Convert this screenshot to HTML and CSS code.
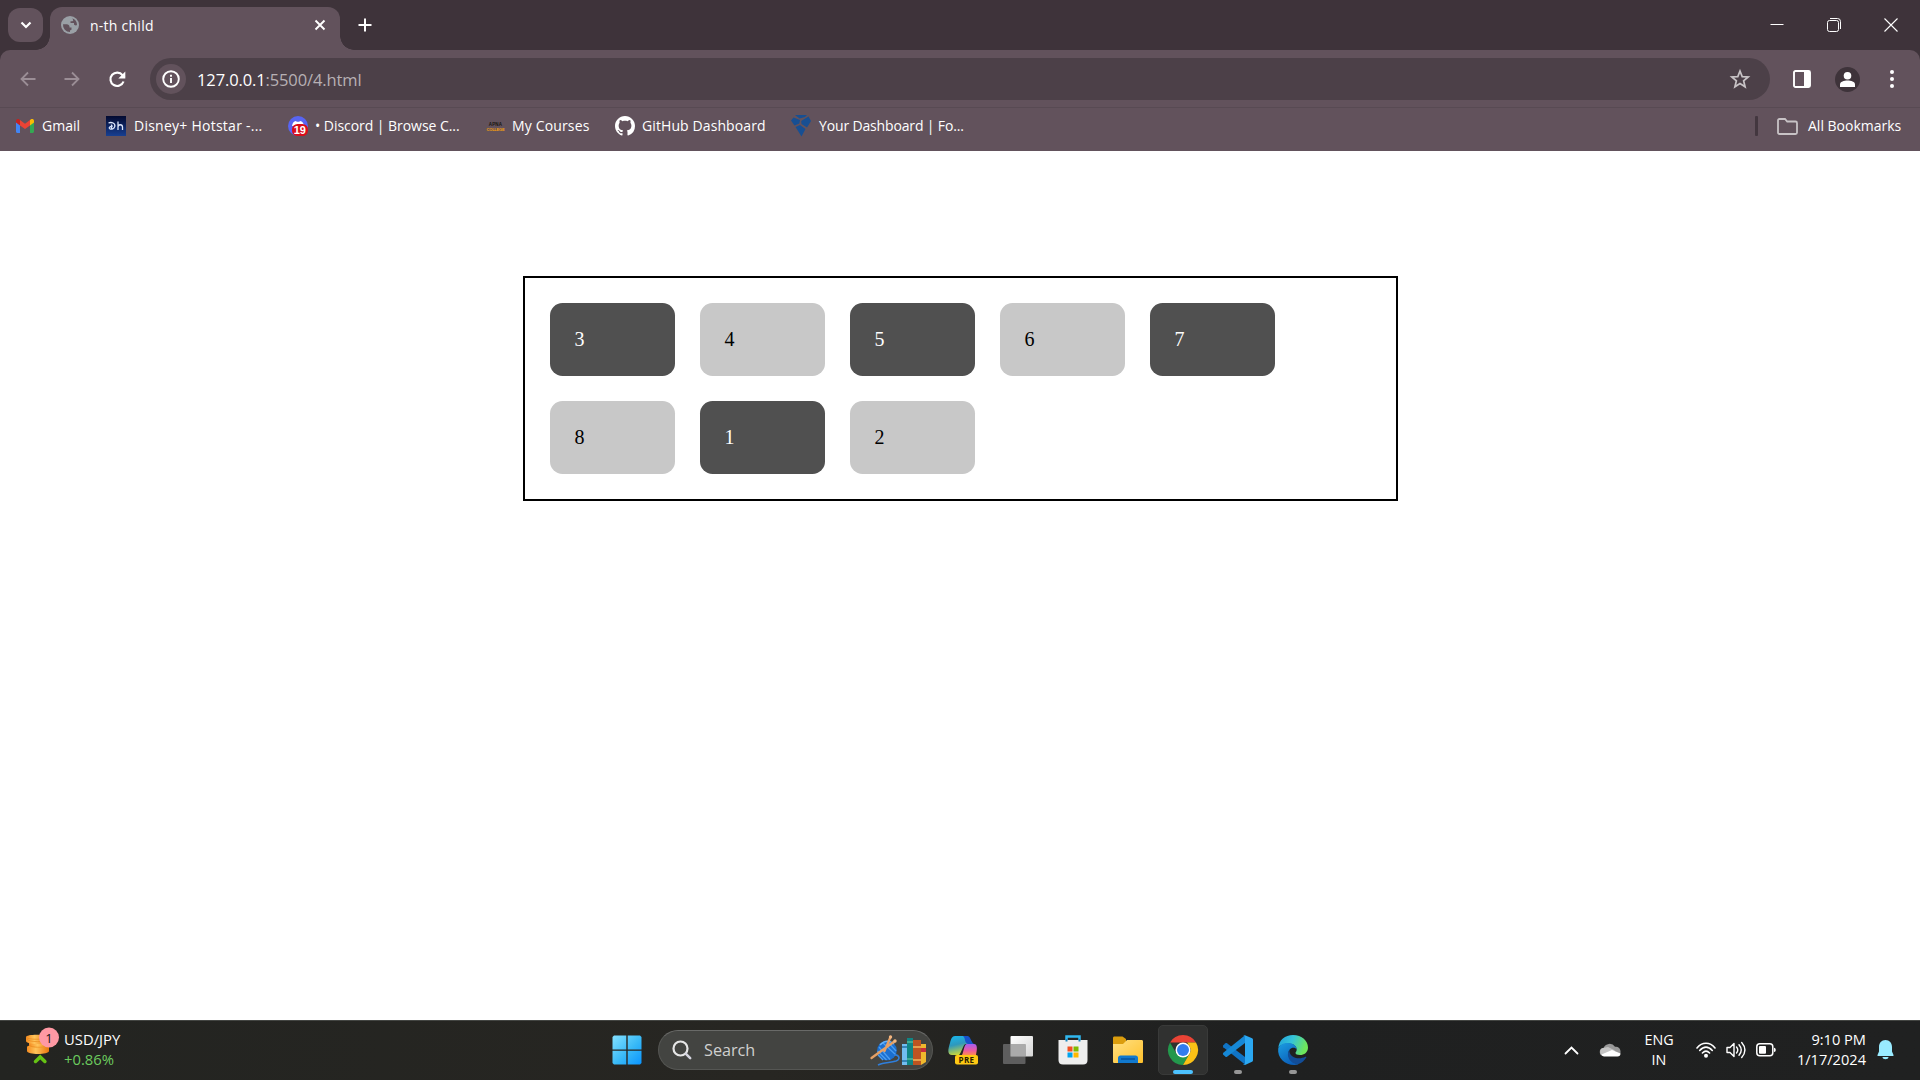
FILE: index.html
```html
<!DOCTYPE html>
<html lang="en">
<head>
<meta charset="utf-8">
<title>n-th child</title>
<link rel="stylesheet" href="styles.css">
</head>
<body>
<header class="browser">
  <div class="tabstrip">
    <button class="tab-search" aria-label="Search tabs"><svg width="12" height="12" viewBox="0 0 12 12"><path d="M1.500 3.500 6 8l4.500-4.500" fill="none" stroke="#fff" stroke-width="2.200"/></svg></button>
    <div class="tab">
      <svg class="tab-favicon" width="18" height="18" viewBox="0 0 18 18"><circle cx="9" cy="9" r="9" fill="#9aa0a6"/><path d="M11 2.200A7 7 0 0 1 16 9c-.8.800-3 .3-3-.8V7H9.500V5.200h1.800c1 0 1-1 .7-1.500-.3-.6-.5-1-.1-1.500zM2 8.300h3.800c1.500 0 2.700 1 2.700 2.500v.7h2v1.700c0 .8-.6 1-1.500 1V16A7 7 0 0 1 2 8.300z" fill="#62525c"/></svg>
      <span class="tab-title">n-th child</span>
      <svg class="tab-close" width="12" height="12" viewBox="0 0 12 12"><path d="m1.500 1.500 9 9m0-9-9 9" stroke="#fff" stroke-width="1.900"/></svg>
    </div>
    <svg class="new-tab" width="14" height="14" viewBox="0 0 14 14"><path d="M7 .5v13M.5 7h13" stroke="#fff" stroke-width="2"/></svg>
    <div class="window-controls">
      <svg width="14" height="14" viewBox="0 0 14 14"><path d="M.5 6.500h13" stroke="#fff"/></svg>
      <svg width="14" height="14" viewBox="0 0 14 14" fill="none" stroke="#fff"><rect x=".5" y="2.500" width="11" height="11" rx="2"/><path d="M3 .5h7.500a3 3 0 0 1 3 3V11"/></svg>
      <svg width="14" height="14" viewBox="0 0 14 14"><path d="m.5.5 13 13m0-13-13 13" stroke="#fff" stroke-width="1.100"/></svg>
    </div>
  </div>
  <div class="toolbar">
    <svg class="nav-back" width="16" height="16" viewBox="0 0 16 16"><path d="M15.500 8H2M8 1.500 1.500 8 8 14.500" fill="none" stroke="#9b8e96" stroke-width="1.800"/></svg>
    <svg class="nav-forward" width="16" height="16" viewBox="0 0 16 16"><path d="M.5 8H14M8 1.500 14.500 8 8 14.500" fill="none" stroke="#9b8e96" stroke-width="1.800"/></svg>
    <svg class="nav-reload" width="17" height="17" viewBox="0 0 17 17"><path d="M14.500 10.500a6.700 6.700 0 1 1-1-6.300l2 2" fill="none" stroke="#fff" stroke-width="2.200"/><path d="M16.300.5v7h-7z" fill="#fff"/></svg>
    <div class="omnibox">
      <span class="site-info"><svg width="18" height="18" viewBox="0 0 18 18"><circle cx="9" cy="9" r="7.800" fill="none" stroke="#fff" stroke-width="1.900"/><path d="M9 8v5M9 4.700v2" stroke="#fff" stroke-width="1.900"/></svg></span>
      <span class="url"><span class="host">127.0.0.1</span>:5500/4.html</span>
      <svg class="star" width="20" height="20" viewBox="0 0 20 20"><path d="m10 2 2.200 5.600 6 .4-4.600 3.800 1.500 6L10 14.500l-5.100 3.300 1.500-6L1.800 8l6-.4z" fill="none" stroke="#c8c3c6" stroke-width="1.700"/></svg>
    </div>
    <svg class="side-panel" width="18" height="18" viewBox="0 0 18 18"><rect x="1" y="1" width="16" height="16" rx="1.500" fill="none" stroke="#fff" stroke-width="1.900"/><path d="M11 1h6v16h-6z" fill="#fff"/></svg>
    <svg class="profile" width="25" height="25" viewBox="0 0 25 25"><circle cx="12.500" cy="12.500" r="12.500" fill="#3e333a"/><circle cx="12.500" cy="8.700" r="3.800" fill="#fff"/><path d="M5 20v-2.500c0-3 4-4 7.500-4s7.500 1 7.500 4V20z" fill="#fff"/></svg>
    <svg class="menu" width="4" height="18" viewBox="0 0 4 18" fill="#fff"><circle cx="2" cy="2" r="2"/><circle cx="2" cy="9" r="2"/><circle cx="2" cy="16" r="2"/></svg>
  </div>
  <nav class="bookmarks">
    <a class="bm bm-gmail"><svg width="18" height="14" viewBox="0 0 18 14"><path d="M0 2v10.500C0 13.400.6 14 1.500 14H4V5z" fill="#4285f4"/><path d="M14 5v9h2.500c.9 0 1.500-.6 1.500-1.500V2z" fill="#34a853"/><path d="M14 1v5.500L18 3.500V2c0-2-2-2.500-3.300-1.500z" fill="#fbbc04"/><path d="M4 1v5.500L9 10l5-3.500V1L9 4.800z" fill="#ea4335"/><path d="M0 2v1.500l4 3V1L3.300.5C2-.5 0 .2 0 2z" fill="#c5221f"/></svg><span>Gmail</span></a>
    <a class="bm bm-hotstar"><svg width="20" height="20" viewBox="0 0 20 20"><defs><linearGradient id="hs" x2="0" y2="1"><stop stop-color="#030a30"/><stop offset="1" stop-color="#173f91"/></linearGradient></defs><path fill="url(#hs)" d="M0 0h20v20H0z"/><path d="M2.500 7c3-1.300 7 .2 6.300 3.300-.5 2.300-3.500 3.500-5 2.500-1.700-1.200.7-2.700 3-2.700M5.500 8.500v5M12 5.500V14M12 11c0-3 4.500-3 4.500 0v3" fill="none" stroke="#dce6fa" stroke-width="1.300"/></svg><span>Disney+ Hotstar -...</span></a>
    <a class="bm bm-discord"><svg width="20" height="20" viewBox="0 0 20 20"><circle cx="10" cy="10" r="10" fill="#5865f2"/><path d="M4 10c.5-3 1.500-4.500 4-5l.7.800h2.600L12 5c2.500.5 3.500 2 4 5z" fill="#fff"/><rect x="4" y="8" width="16" height="12" rx="5.500" fill="#d90d1a"/><text x="11.700" y="18" class="badge-count">19</text></svg><span>• Discord | Browse C...</span></a>
    <a class="bm bm-courses"><svg width="19" height="18" viewBox="0 0 19 18"><text x="9.500" y="9" class="apna">APNA</text><text x="9.500" y="13.500" class="college">COLLEGE</text></svg><span>My Courses</span></a>
    <a class="bm bm-github"><svg width="20" height="20" viewBox="0 0 16 16"><path fill="#fff" d="M8 0C3.580 0 0 3.580 0 8c0 3.540 2.290 6.530 5.470 7.590.4.070.55-.17.55-.38 0-.19-.01-.82-.01-1.490-2.010.37-2.530-.49-2.690-.94-.09-.23-.48-.94-.82-1.130-.28-.15-.68-.52-.01-.53.63-.01 1.080.58 1.230.82.72 1.210 1.870.87 2.330.66.07-.52.28-.87.51-1.070-1.780-.2-3.640-.89-3.640-3.950 0-.87.31-1.590.82-2.150-.08-.2-.36-1.020.08-2.120 0 0 .67-.21 2.200.82.64-.18 1.320-.27 2-.27s1.360.09 2 .27c1.530-1.040 2.200-.82 2.200-.82.44 1.100.16 1.920.08 2.120.51.56.82 1.270.82 2.150 0 3.070-1.870 3.750-3.650 3.950.29.25.54.73.54 1.480 0 1.070-.01 1.930-.01 2.200 0 .21.15.46.55.38A8.010 8.010 0 0 0 16 8c0-4.420-3.580-8-8-8z"/></svg><span>GitHub Dashboard</span></a>
    <a class="bm bm-dashboard"><svg width="20" height="22" viewBox="0 0 20 22" fill="#174f93"><path d="M4 0h12l-2 2L8.500 3.500zM2.500 2.500l6.500 2.500-.7 3.500L3.500 10.500 0 5.500zM15 3l2.500-1.500L20 6l-4 6.500-5.500-3.500-.3-3zM4.500 12 9 10l5.500 4L10.500 21.500z"/></svg><span>Your Dashboard | Fo...</span></a>
    <span class="bm-divider"></span>
    <a class="bm bm-all"><svg width="21" height="17" viewBox="0 0 21 17"><path d="M1 2.500C1 1.600 1.600 1 2.500 1H8l2.200 2.500h8.300c.9 0 1.500.6 1.500 1.500v9.500c0 .9-.6 1.500-1.500 1.500h-16c-.9 0-1.500-.6-1.500-1.500z" fill="none" stroke="#c8c3c6" stroke-width="1.800"/></svg><span>All Bookmarks</span></a>
  </nav>
</header>

<main class="page">
  <div class="container">
    <div class="box">3</div>
    <div class="box">4</div>
    <div class="box">5</div>
    <div class="box">6</div>
    <div class="box">7</div>
    <div class="box">8</div>
    <div class="box">1</div>
    <div class="box">2</div>
  </div>
</main>

<footer class="taskbar">
  <div class="widgets">
    <svg width="34" height="38" viewBox="0 0 34 38"><defs><linearGradient id="coin"><stop stop-color="#f48b20"/><stop offset=".4" stop-color="#ffc45a"/><stop offset="1" stop-color="#e8750e"/></linearGradient></defs><g fill="url(#coin)"><path d="M2 20c0-3 22-3 22 0v4c0 4-22 4-22 0z"/><path d="M4 14c0-3 21-3 21 0v4c0 4-21 4-21 0z"/><path d="M1 10c0-3 21-3 21 0v4c0 4-21 4-21 0z"/></g><path d="M2 12c1 3.500 20 3.500 21 0M4 18c2 3 18 3 20 0M1 10c0 3 21 3 21 0" fill="none" stroke="#e98a1c" stroke-width=".7"/><path d="m10.500 34.500 4.700-4.500 4.700 4.500" fill="none" stroke="#65c214" stroke-width="3.500" stroke-linecap="round"/><circle cx="24" cy="10.500" r="10" fill="#ff99a4"/><text x="24" y="15.500" class="widget-count">1</text></svg>
    <div class="ticker"><span>USD/JPY</span><span class="gain">+0.86%</span></div>
  </div>

  <div class="apps">
    <span class="app"><svg width="30" height="30" viewBox="0 0 30 30"><defs><linearGradient id="win" x2="1" y2="1"><stop stop-color="#84e1ff"/><stop offset=".55" stop-color="#38b9f7"/><stop offset="1" stop-color="#0a94ff"/></linearGradient></defs><path fill="url(#win)" d="M2 .5h12.300v14H.5V2zM15.700.5H28L29.500 2v12.500H15.700zM.5 15.800h13.800v13.700H2L.5 28zM15.700 15.800h13.800V28L28 29.500H15.700z"/></svg></span>
    <div class="search">
      <svg width="20" height="20" viewBox="0 0 20 20"><circle cx="8.500" cy="8.500" r="7" fill="none" stroke="#e6e6e6" stroke-width="2.200"/><path d="m13.700 13.700 4.500 4.500" stroke="#d5d5df" stroke-width="2.500" stroke-linecap="round"/></svg>
      <span class="search-label">Search</span>
      <svg class="search-art" width="57" height="31" viewBox="0 0 57 31"><circle cx="17" cy="15.500" r="9.800" fill="#1b6fd0"/><path d="m9 12 11 12.500M13 8l13 12M18 7l8 9M7.500 16l9 9M8 20l5 5" stroke="#4b9df0" stroke-width="1.300"/><path d="M10 10c4-4 9-5 14-1" fill="none" stroke="#68b3fa" stroke-width="1.500"/><path d="M24 20c5-1 7 4 2 6-6 2-12 1-18 4" fill="none" stroke="#2f7fdd" stroke-width="1.600"/><path d="m20.500 2-6 14M25 6 1.500 23" stroke="#e5a065" stroke-width="2.300" stroke-linecap="round"/><circle cx="20.500" cy="2" r="1.700" fill="#f3b680"/><circle cx="25" cy="6" r="1.700" fill="#f3b680"/><path d="M32 9h5v21h-5z" fill="#72bdf0"/><path d="M37 3h6v27h-6z" fill="#108584"/><path d="M43 5h8v25h-8z" fill="#bd5421"/><path d="M51 9h5v18l-5 3z" fill="#efb82d"/><path d="M32 12h5M32 26h5" stroke="#2372a5" stroke-width="1.500"/><path d="M37 7h6M37 24h6" stroke="#70d1a0"/><path d="M43 12h8M43 25h8" stroke="#f3b75c" stroke-width="1.500"/><path d="M51 13h5v4h-5z" fill="#c92d3c"/></svg>
    </div>
    <span class="app"><svg width="30" height="30" viewBox="0 0 30 30"><defs><linearGradient id="cp1" x2=".3" y2="1"><stop stop-color="#18b9ef"/><stop offset=".5" stop-color="#2e98bd"/><stop offset="1" stop-color="#c8d63b"/></linearGradient><linearGradient id="cp2" x2="0" y2="1"><stop stop-color="#a45cf2"/><stop offset=".6" stop-color="#ee5b9e"/><stop offset="1" stop-color="#ff8a50"/></linearGradient></defs><path d="M7 1h11c4 0 5 7 7 8h-7c-3 0-4 8-7 11H4c-5 0-4-6-2-12 1-4 2-7 5-7z" fill="url(#cp1)"/><path d="M15 1h4c4 0 4 7 7 8h-6c-4-1-2-6-5-8z" fill="#1752cb"/><path d="M19 9h7c4 0 3 6 2 11H14c2-4 2-11 5-11z" fill="url(#cp2)"/><rect x="7" y="20" width="23" height="9.500" rx="2" fill="#ffc914"/><text x="18.500" y="28" class="pre">PRE</text></svg></span>
    <span class="app"><svg width="30" height="30" viewBox="0 0 30 30"><defs><linearGradient id="tv" x2="1" y2="1"><stop stop-color="#fff"/><stop offset="1" stop-color="#d5d5d5"/></linearGradient></defs><rect x="7.500" y="1" width="22.500" height="20.500" rx="1" fill="url(#tv)"/><rect y="9" width="22.500" height="20" rx="1" fill="#666" opacity=".88"/><path d="M7.500 9h15v12.500h-15z" fill="#aaa"/></svg></span>
    <span class="app"><svg width="30" height="30" viewBox="0 0 30 30"><path d="M8.500 7V1.500h13V7" fill="none" stroke="#30b8ef" stroke-width="2.500"/><path d="M.5 5h29v20c0 3-1.500 4.500-4.500 4.500H5c-3 0-4.500-1.500-4.500-4.500z" fill="#eee"/><path d="M8.500 4v2.500M21.500 4v2.500" stroke="#1b88bd" fill="none" stroke-width="2"/><path fill="#f25022" d="M9.500 11.500h5v5h-5z"/><path fill="#7fba00" d="M15.500 11.500h5v5h-5z"/><path fill="#00a4ef" d="M9.500 17.500h5v5h-5z"/><path fill="#ffb900" d="M15.500 17.500h5v5h-5z"/></svg></span>
    <span class="app"><svg width="30" height="30" viewBox="0 0 30 30"><defs><linearGradient id="fold" x2="1" y2="1"><stop stop-color="#ffe083"/><stop offset="1" stop-color="#ffc12b"/></linearGradient></defs><path d="M0 3c0-1 .6-1.500 1.500-1.500h8L13 4v6H0z" fill="#db9d0d"/><path d="M0 9h10l4-4h14.500c1 0 1.500.6 1.500 1.500v20c0 1-.5 1.500-1.500 1.500h-27C.6 28 0 27.500 0 26.500z" fill="url(#fold)"/><path d="M5 28v-5c0-1.500 1-2.500 2.500-2.500h15c1.500 0 2.500 1 2.500 2.500v5z" fill="#1179ce"/><path d="M8 24h14" stroke="#07539c" stroke-width="1.500"/></svg></span>
    <span class="app active"><svg width="30" height="30" viewBox="0 0 30 30"><path d="M2 7.500A15 15 0 0 1 28 7.500H15z" fill="#e94335"/><path d="M2 7.500A15 15 0 0 0 15 30l6.500-11.250L8.500 18.750z" fill="#23984c"/><path d="M28 7.500A15 15 0 0 1 15 30l6.500-11.250a7.500 7.500 0 0 0 0-7.500L19 7.500z" fill="#fbc116"/><circle cx="15" cy="15" r="7.500" fill="#fff"/><circle cx="15" cy="15" r="6" fill="#317cef"/></svg></span>
    <span class="app running"><svg width="30" height="30" viewBox="0 0 30 30"><path d="m0 10.500 2.500-2.300c.6-.4 1-.3 1.500 0L22 22v7.500L.3 12.300C-.1 11.700-.2 11 0 10.500z" fill="#1074c5"/><path d="m0 19.500 2.500 2.300c.6.4 1 .3 1.500 0L22 8V.3L.3 17.700c-.4.500-.5 1.200-.3 1.800z" fill="#1688d6"/><path d="M22 .3 28.500 3c1 .4 1.500 1 1.500 2v20c0 1-.5 1.700-1.500 2L22 30c-.8.2-1.400 0-2-.6 1 .5 2-.1 2-1.400V2c0-1.300-1-2-2-1.400.6-.5 1.300-.6 2-.3z" fill="#2ba8f2"/></svg></span>
    <span class="app running"><svg width="30" height="30" viewBox="0 0 30 30"><defs><linearGradient id="eg" x2="1" y2=".3"><stop stop-color="#209fdb"/><stop offset=".5" stop-color="#35c4d8"/><stop offset="1" stop-color="#6ee65b"/></linearGradient><linearGradient id="eb" x2=".6" y2="1"><stop stop-color="#1b9de2"/><stop offset="1" stop-color="#0b5eb8"/></linearGradient></defs><path d="M.3 13C1 5 7 0 15 0c9 0 15 6 15 12.500 0 5-4 7.500-8 7.500-3 0-4.500-1-4.500-2 0-1 1.200-1.400 1.200-3.500 0-3-3-6-8-6C5 8.500 1 11 .3 13z" fill="url(#eg)"/><path d="M.2 13.500C1.500 10 5 8 10 8c5.500 0 8.700 3 8.700 6.500-1-2-5-2.500-7 0-4 5 1 13 9 15C9 32-1 24 .2 13.500z" fill="url(#eb)"/><path d="M11.500 14.500C7 21 13 29.500 20.500 29c3.500-1.200 6-3.500 7.800-6.500.3-.7-.3-1-.9-.7C20 25.500 10.500 22 11.500 14.500z" fill="#124d98"/></svg></span>
  </div>

  <div class="tray">
    <svg class="tray-up" width="15" height="9" viewBox="0 0 15 9"><path d="m1.500 7.500 6-6 6 6" fill="none" stroke="#fff" stroke-width="1.800" stroke-linecap="round"/></svg>
    <svg class="tray-cloud" width="21" height="14" viewBox="0 0 21 14"><path d="M4 13a4 4 0 0 1-.5-8A6.500 6.500 0 0 1 15 3.800a4.800 4.800 0 0 1 2.500 9.200z" fill="#999"/><path d="m3 5 5-1 7 3.500L6 13H4C-1 12-1 6 3 5z" fill="#c5c5c5"/><path d="M1.500 11.500 12 7l8.500 3.500c0 2-1.200 3-3 3H4c-1 0-2-.8-2.500-2z" fill="#fff"/></svg>
    <div class="lang"><span>ENG</span><span>IN</span></div>
    <svg class="tray-wifi" width="20" height="16" viewBox="0 0 20 16"><g fill="none" stroke="#fff" stroke-width="1.600" stroke-linecap="round"><path d="M1 6c5-6.300 13-6.300 18 0M3.700 8.500c4-4.500 8.600-4.500 12.600 0M6.400 11c2.400-2.400 4.800-2.400 7.200 0"/></g><circle cx="10" cy="13.700" r="2" fill="#fff"/></svg>
    <svg class="tray-sound" width="20" height="18" viewBox="0 0 20 18" fill="none" stroke="#fff" stroke-width="1.400"><path d="M1 6.500h3l4-4v13l-4-4H1z" stroke-linejoin="round"/><path d="M10.500 6c1.700 2 1.700 4 0 6M13 3.700c3 3.500 3 7 0 10.600M15.700 1.500c4.300 5 4.300 10 0 15" stroke-linecap="round"/></svg>
    <svg class="tray-battery" width="20" height="14" viewBox="0 0 20 14"><rect x=".8" y=".8" width="16" height="12" rx="3" fill="none" stroke="#fff" stroke-width="1.500"/><rect x="3" y="3" width="7" height="7.700" rx="1" fill="#fff"/><path d="M18 4.700c2.300 0 2.300 4.300 0 4.300z" fill="#fff"/></svg>
    <div class="clock"><span>9:10 PM</span><span>1/17/2024</span></div>
    <svg class="tray-bell" width="17" height="20" viewBox="0 0 17 20" fill="#99ebff"><path d="M8.500 0C4.500 0 2 3 2 7v4.500L.5 15c-.2.600.1 1 .7 1h14.600c.6 0 .9-.4.7-1L15 11.500V7c0-4-2.500-7-6.500-7zM5.500 17h6c0 3-6 3-6 0z"/></svg>
  </div>
</footer>
</body>
</html>
```
FILE: styles.css
```css
* { box-sizing: border-box; }
body {
  margin: 0;
  height: 1080px;
  overflow: hidden;
  display: flex;
  flex-direction: column;
  background: #fff;
  font-family: "Open Sans", "Noto Sans", sans-serif;
  font-size: 14px;
  color: #fff;
}
svg { display: block; flex: none; overflow: visible; }

/* Browser chrome */
.browser { height: 151px; background: #3e333a; flex: none; }
.tabstrip { display: flex; height: 50px; align-items: flex-start; }
.tab-search {
  margin: 8px 0 0 8px;
  padding: 0;
  width: 35px;
  height: 34px;
  border: 0;
  border-radius: 12px;
  background: #62525c;
  display: grid;
  place-items: center;
}
.tab {
  position: relative;
  margin: 7px 0 0 7px;
  width: 290px;
  height: 43px;
  padding: 0 14px 7px 11px;
  border-radius: 12px 12px 0 0;
  background: #62525c;
  display: flex;
  align-items: center;
}
.tab::before, .tab::after {
  content: "";
  position: absolute;
  bottom: 0;
  width: 14px;
  height: 14px;
}
.tab::before { left: -14px; background: radial-gradient(circle at 0 0, transparent 13.5px, #62525c 14px); }
.tab::after { right: -14px; background: radial-gradient(circle at 100% 0, transparent 13.5px, #62525c 14px); }
.tab-title { margin-left: 11px; flex: 1; letter-spacing: .25px; }
.new-tab { margin: 18px 0 0 18px; }
.window-controls { margin: 18px 22px 0 auto; display: flex; gap: 43px; }
.toolbar {
  height: 57px;
  background: #62525c;
  border-radius: 10px 10px 0 0;
  display: flex;
  align-items: center;
  padding-top: 1px;
}
.nav-back { margin-left: 20px; }
.nav-forward { margin-left: 28px; }
.nav-reload { margin-left: 29px; }
.omnibox {
  margin-left: 24px;
  width: 1620px;
  height: 42px;
  padding: 0 20px 0 6px;
  border-radius: 21px;
  background: #4c4048;
  display: flex;
  align-items: center;
}
.site-info {
  width: 30px;
  height: 30px;
  border-radius: 50%;
  background: #62525c;
  display: grid;
  place-items: center;
}
.url { margin-left: 11px; flex: 1; font-size: 16.500px; letter-spacing: -.12px; color: #b7b0b4; }
.host { color: #fff; }
.side-panel { margin-left: 23px; }
.profile { margin-left: 24px; }
.menu { margin-left: 30px; }

.bookmarks {
  height: 44px;
  padding: 0 17px 7px 16px;
  border-top: 1px solid #584a53;
  background: #62525c;
  display: flex;
  align-items: center;
}
.bm { display: flex; align-items: center; white-space: nowrap; flex: none; }
.bm span { padding-bottom: 2px; }
.bm-gmail { width: 90px; gap: 8px; }
.bm-hotstar { width: 182px; gap: 8px; letter-spacing: .25px; }
.bm-discord { width: 198px; gap: 7px; letter-spacing: -.05px; }
.bm-courses { width: 129px; gap: 7px; letter-spacing: .15px; }
.bm-github { width: 176px; gap: 7px; letter-spacing: .1px; }
.bm-dashboard { gap: 8px; letter-spacing: -.15px; }
.bm-divider { margin-left: auto; margin-right: 19px; width: 3px; height: 20px; border-radius: 1px; background: #43373f; }
.bm-all { width: 126px; gap: 10px; }
.badge-count { font: bold 11px "Liberation Sans", sans-serif; fill: #fff; text-anchor: middle; }
.apna, .college { font: 900 4.500px "Liberation Sans", sans-serif; text-anchor: middle; }
.apna { fill: #17120f; }
.college { fill: #f8a00c; font-size: 4px; letter-spacing: -.2px; }

/* Page */
.page { height: 869px; padding-top: 125px; color: #000; font: 20px "Liberation Serif", serif; }
.container {
  width: 875px;
  margin-left: 523px;
  padding: 25px;
  border: 2px solid #000;
  display: flex;
  flex-wrap: wrap;
  gap: 25px;
}
.box {
  width: 125px;
  height: 73px;
  padding: 25px 24.500px;
  border-radius: 12.500px;
  line-height: 23px;
  background: #c8c8c8;
}
.box:nth-child(odd) { background: #505050; color: #fff; }

/* Taskbar */
.taskbar {
  height: 60px;
  flex: none;
  border-top: 1px solid #434542;
  background: linear-gradient(90deg, #232421, #272622 40%, #1f2020 65%, #202121);
  display: grid;
  grid-template-columns: 599px 722px 1fr;
}
.widgets { display: flex; padding: 6px 0 0 25px; gap: 5px; }
.ticker, .lang, .clock { display: flex; flex-direction: column; line-height: 20px; }
.ticker { padding-top: 2px; font-size: 14.800px; }
.gain { color: #6ccb5f; }
.widget-count { font: 13px "Open Sans", sans-serif; fill: #151515; text-anchor: middle; }
.apps { display: flex; align-items: flex-start; gap: 5px; padding-top: 4px; }
.app {
  position: relative;
  width: 50px;
  height: 50px;
  border-radius: 5px;
  display: grid;
  place-items: center;
  flex: none;
}
.app:first-child { margin-left: 3px; margin-right: -1px; }
.active { background: #303130; border: 1px solid #393a39; }
.active::after, .running::after {
  content: "";
  position: absolute;
  bottom: 1px;
  left: 50%;
  width: 8px;
  height: 4px;
  margin-left: -4px;
  border-radius: 2px;
  background: #969696;
}
.active::after { width: 20px; margin-left: -10px; bottom: 0; background: #4cc2ff; }
.search {
  width: 275px;
  height: 40px;
  margin: 5px 0 0 2px;
  padding: 0 5px 0 13px;
  border: 1px solid #555653;
  border-top-color: #696a68;
  border-radius: 20px;
  background: #434441;
  display: flex;
  align-items: center;
}
.search-label { margin-left: 12px; flex: 1; font-size: 16.200px; color: #d0d0cf; }
.pre { font: bold 8px "Open Sans", sans-serif; fill: #282000; text-anchor: middle; letter-spacing: .4px; }
.tray { display: flex; align-items: center; padding-bottom: 1px; }
.tray-up { margin-left: 243px; }
.tray-cloud { margin-left: 21px; }
.lang { width: 40px; margin-left: 18px; text-align: center; font-size: 14.300px; }
.tray-wifi { margin-left: 17px; }
.tray-sound { margin-left: 10px; }
.tray-battery { margin-left: 10px; }
.clock { width: 80px; margin-left: 10px; padding-bottom: 2px; text-align: right; font-size: 14.600px; }
.tray-bell { margin-left: 11px; }
```
